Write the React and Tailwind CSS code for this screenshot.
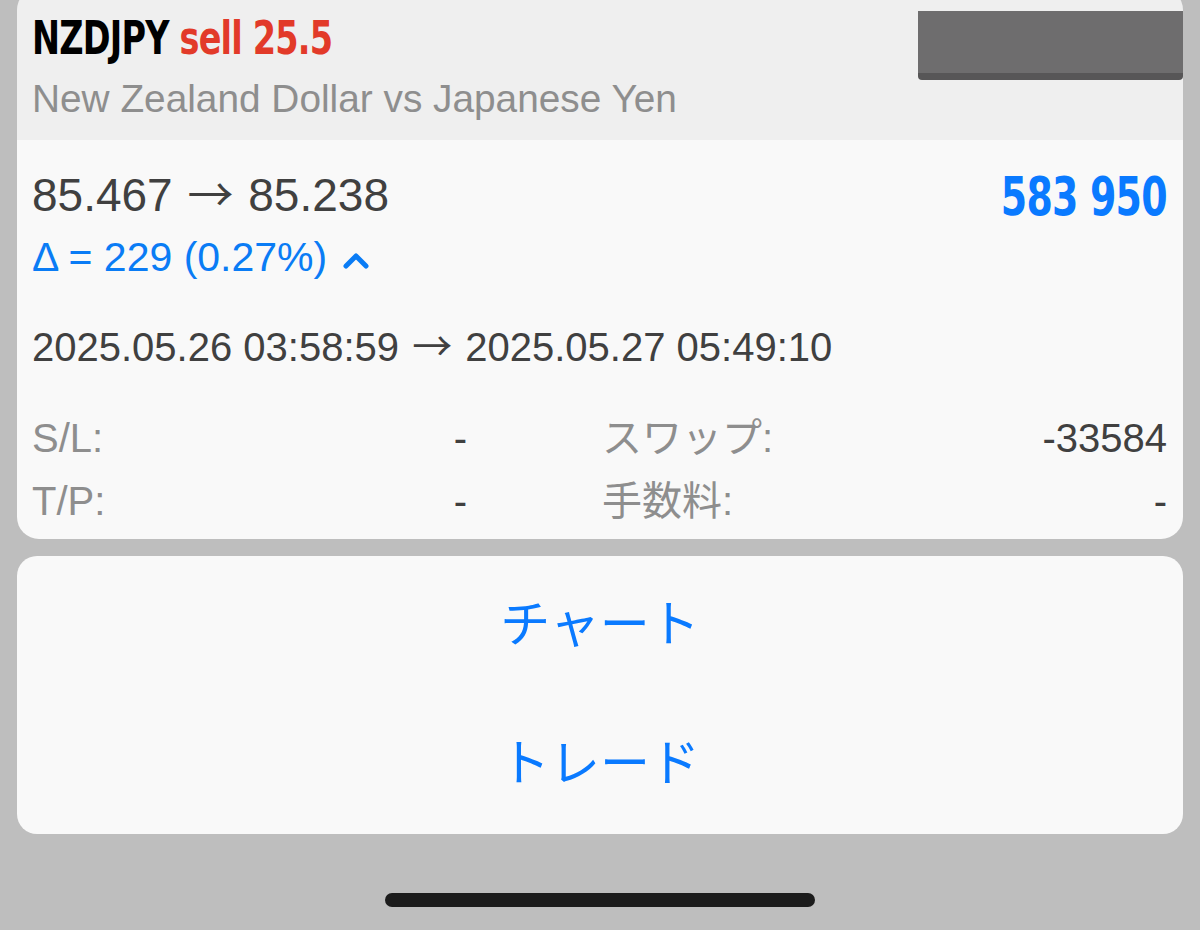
import React from 'react';

const sans = { fontFamily: '"Liberation Sans", "Noto Sans CJK JP", sans-serif' };
const condensed = { fontFamily: '"Liberation Sans Narrow", "DejaVu Sans Condensed", "Liberation Sans", sans-serif' };
const arrowFont = { fontFamily: '"Noto Sans CJK JP", sans-serif' };

const Arrow = () => <span className="mx-[2px]" style={arrowFont}>→</span>;

const ChevronUp = () => (
  <svg width="26" height="18" viewBox="0 0 26 18" className="ml-[16px] mt-[4px]">
    <polyline points="3,15 13,5 23,15" fill="none" stroke="#0a7cf5" strokeWidth="5" strokeLinecap="round" strokeLinejoin="round" />
  </svg>
);

const InfoRow = ({ label1, value1, label2, value2, className }) => (
  <div className={`flex items-center text-[40px] ${className}`}>
    <div className="flex w-[435px] justify-between">
      <span className="text-[#8e8e8e]">{label1}</span>
      <span className="text-[#404040]">{value1}</span>
    </div>
    <div className="ml-[135px] flex flex-1 justify-between">
      <span className="text-[#8e8e8e]">{label2}</span>
      <span className="text-[#404040]">{value2}</span>
    </div>
  </div>
);

export default function App() {
  return (
    <div className="w-[1200px] h-[930px] bg-[#bebebe] px-[17px] flex flex-col overflow-hidden" style={sans}>
      {/* Position card */}
      <div className="-mt-[12px] rounded-[22px] overflow-hidden">
        <div className="relative h-[152px] bg-[#efefef] pt-[12px] pl-[15px]">
          <div className="h-[76px] leading-[76px] text-[46px] font-bold tracking-[-1px]" style={condensed}>
            <span className="inline-block origin-left scale-x-[0.81] whitespace-nowrap">
              <span className="text-black">NZDJPY</span>{' '}
              <span className="text-[#e23a29]">sell 25.5</span>
            </span>
          </div>
          <div className="h-[45px] leading-[45px] text-[38.8px] text-[#8e8e8e]">New Zealand Dollar vs Japanese Yen</div>
          <div className="absolute right-0 top-[23px] w-[265px] h-[69px] bg-[#6e6d6e] rounded-b-[4px] border-b-[7px] border-[#575657]" />
        </div>

        <div className="h-[399px] bg-[#f9f9f9] pl-[15px] pr-[16px] pt-[20px]">
          <div className="flex items-start justify-between h-[62px]">
            <div className="leading-[62px] text-[46px] text-[#404040] whitespace-nowrap">
              85.467 <Arrow /> 85.238
            </div>
            <div className="mt-[6px] leading-[62px] text-[54px] font-bold text-[#0a7aff] tracking-[-1px]" style={condensed}>
              <span className="inline-block origin-right scale-x-[0.78] whitespace-nowrap">583 950</span>
            </div>
          </div>
          <div className="flex items-center h-[72px] text-[41px] text-[#0a7cf5]">
            <span>Δ = 229 (0.27%)</span>
            <ChevronUp />
          </div>
          <div className="flex items-center h-[102px] text-[40px] text-[#404040] whitespace-nowrap">
            <span>
              2025.05.26 03:58:59 <Arrow /> 2025.05.27 05:49:10
            </span>
          </div>
          <InfoRow className="h-[84px]" label1="S/L:" value1="-" label2="スワップ:" value2="-33584" />
          <InfoRow className="h-[42px]" label1="T/P:" value1="-" label2="手数料:" value2="-" />
        </div>
      </div>

      {/* Actions */}
      <div className="mt-[17px] h-[278px] rounded-[20px] bg-[#f9f9f9] flex flex-col">
        <button className="h-[139px] text-[50px] text-[#0a7aff]">チャート</button>
        <button className="h-[139px] text-[50px] text-[#0a7aff]">トレード</button>
      </div>

      <div className="mt-[59px] mx-auto w-[430px] h-[14px] rounded-full bg-[#1c1c1c]" />
    </div>
  );
}
